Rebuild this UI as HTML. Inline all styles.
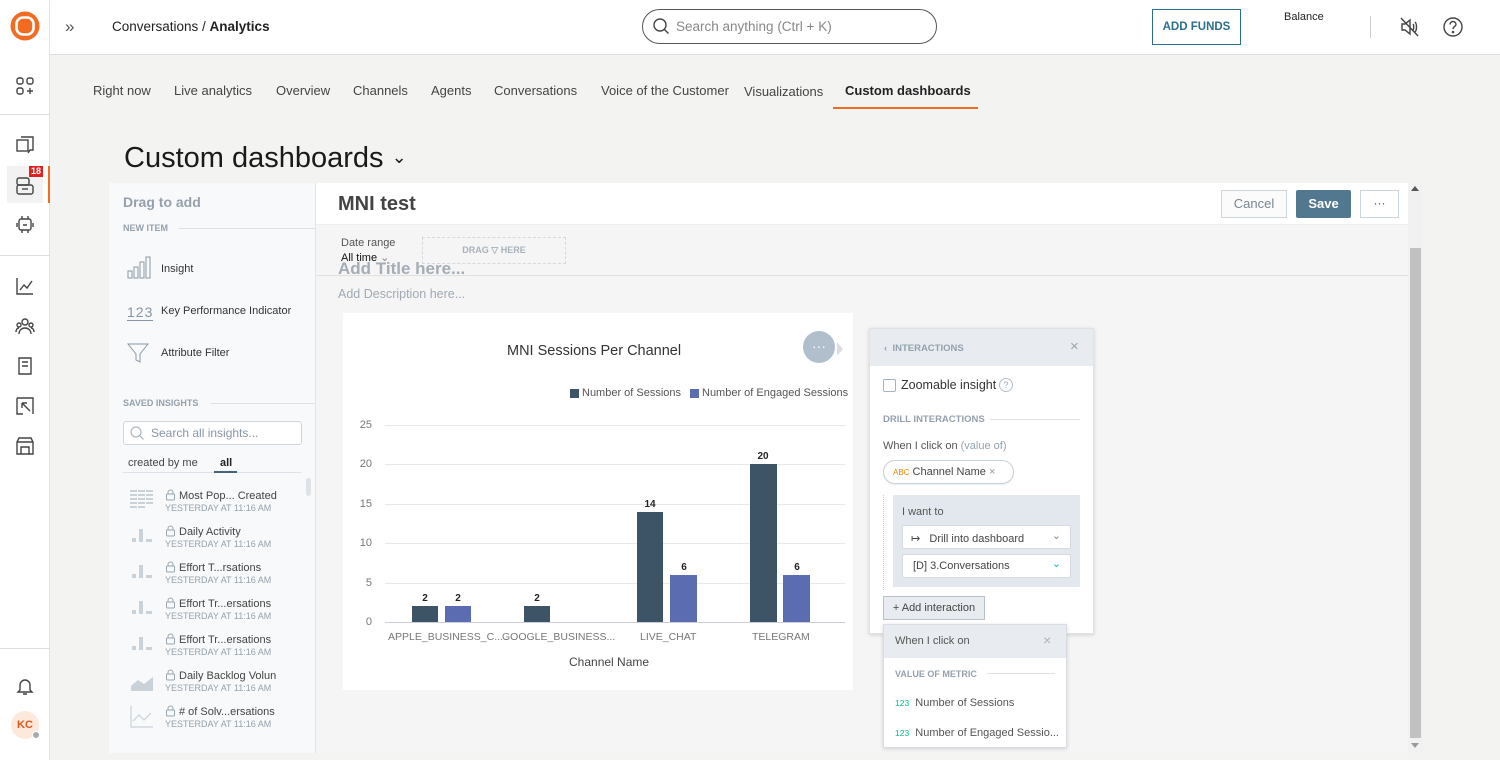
<!DOCTYPE html>
<html><head><meta charset="utf-8"><style>
*{box-sizing:border-box;margin:0;padding:0}
body{width:1500px;height:760px;overflow:hidden;font-family:"Liberation Sans",sans-serif;background:#f3f3f2;position:relative;color:#333}
.a{position:absolute}
.ic{position:absolute;stroke:#444;fill:none;stroke-width:1.4}
.tab{position:absolute;top:83px;font-size:13px;color:#444}
.grey{color:#94a1ad}
.si{position:absolute;left:130px;font-size:11px;color:#444;padding-left:49px}
.si b{display:block;font-weight:normal;font-size:9px;color:#94a1ad;margin-top:1px;margin-left:-14px}
.lk{position:absolute;left:35px;top:1px}
.gl{position:absolute;left:385px;width:460px;height:1px;background:#e8e8e8}
.yl{position:absolute;left:358px;width:14px;text-align:right;font-size:11px;color:#777}
.bar{position:absolute;width:26px}
.bv{position:absolute;font-size:10px;font-weight:bold;color:#222;width:26px;text-align:center}
</style></head><body>
<!-- left rail -->
<div class="a" style="left:0;top:0;width:50px;height:760px;background:#fff;border-right:1px solid #e4e4e4"></div>
<svg class="a" style="left:10px;top:11px" width="30" height="30"><circle cx="15" cy="15" r="14.5" fill="#f26b22"/><rect x="6.5" y="6.5" width="17" height="17" rx="6.5" fill="none" stroke="#fff" stroke-width="2.6"/><rect x="10.5" y="10.5" width="9" height="9" rx="3" fill="#f26b22"/></svg>
<div class="a" style="left:0;top:114px;width:50px;height:1px;background:#ddd"></div>
<div class="a" style="left:0;top:255px;width:50px;height:1px;background:#ddd"></div>
<div class="a" style="left:0;top:648px;width:50px;height:1px;background:#ddd"></div>
<svg class="ic" style="left:15px;top:76px" width="20" height="20"><rect x="2" y="2" width="6" height="6" rx="2"/><rect x="12" y="2" width="6" height="6" rx="2"/><rect x="2" y="12" width="6" height="6" rx="2"/><path d="M15 12v6M12 15h6"/></svg>
<svg class="ic" style="left:15px;top:136px" width="20" height="20"><rect x="2" y="4" width="11" height="11"/><path d="M6 1h12v13h-3l-2 3"/></svg>
<div class="a" style="left:7px;top:166px;width:36px;height:37px;background:#f2f2f2"></div>
<div class="a" style="left:48px;top:166px;width:2px;height:37px;background:#f26b22"></div>
<svg class="ic" style="left:15px;top:176px" width="20" height="20"><rect x="2" y="2" width="12" height="7" rx="2"/><rect x="2" y="9" width="16" height="9" rx="2"/><path d="M7 13h6"/></svg>
<div class="a" style="left:29px;top:166px;background:#d22;color:#fff;font-size:9px;font-weight:bold;padding:0 2px;line-height:11px">18</div>
<svg class="ic" style="left:15px;top:214px" width="20" height="20"><rect x="4" y="5" width="12" height="11" rx="2"/><path d="M2 9v4M18 9v4M7 2v3M13 2v3M8 11h4M7 16v3M13 16v3"/></svg>
<svg class="ic" style="left:15px;top:276px" width="20" height="20"><path d="M2 2v16h16M5 14l4-5 3 3 5-7"/></svg>
<svg class="ic" style="left:15px;top:316px" width="20" height="20"><circle cx="10" cy="6" r="3"/><circle cx="4" cy="9" r="2"/><circle cx="16" cy="9" r="2"/><path d="M4 18c0-4 3-6 6-6s6 2 6 6M1 16c0-2 1-4 3-4M19 16c0-2-1-4-3-4"/></svg>
<svg class="ic" style="left:15px;top:356px" width="20" height="20"><path d="M4 2h12v16H4zM7 6h6M7 10h6"/></svg>
<svg class="ic" style="left:15px;top:396px" width="20" height="20"><path d="M2 2h16v16M2 2v16h6M7 7l8 8M7 7h5M7 7v5"/></svg>
<svg class="ic" style="left:15px;top:436px" width="20" height="20"><path d="M2 6l2-4h12l2 4v12H2zM2 6h16M6 18v-7h8v7"/></svg>
<svg class="ic" style="left:15px;top:676px" width="20" height="20"><path d="M5 14V9a5 5 0 0110 0v5l2 2H3zM8 18h4"/></svg>
<div class="a" style="left:11px;top:711px;width:28px;height:28px;border-radius:50%;background:#fde9dc;color:#e4561b;font-size:11px;font-weight:bold;text-align:center;line-height:28px">KC</div>
<div class="a" style="left:32px;top:731px;width:8px;height:8px;border-radius:50%;background:#aaa;border:1px solid #fff"></div>
<!-- top bar -->
<div class="a" style="left:50px;top:0;width:1450px;height:55px;background:#fff;border-bottom:1px solid #ddd"></div>
<div class="a" style="left:65px;top:17px;font-size:17px;color:#555">»</div>
<div class="a" style="left:112px;top:19px;font-size:13.5px;color:#222">Conversations / <b>Analytics</b></div>
<div class="a" style="left:642px;top:9px;width:295px;height:35px;border:1px solid #555;border-radius:18px;font-size:13.5px;color:#888;padding:9px 0 0 33px">Search anything (Ctrl + K)</div>
<svg class="ic" style="left:652px;top:17px" width="18" height="18"><circle cx="8" cy="8" r="6"/><path d="M12.5 12.5l4 4"/></svg>
<div class="a" style="left:1152px;top:9px;width:89px;height:36px;border:1px solid #2b6f8f;color:#2b6f8f;font-size:11.5px;font-weight:bold;text-align:center;line-height:34px">ADD FUNDS</div>
<div class="a" style="left:1284px;top:11px;font-size:11px;color:#222">Balance</div>
<div class="a" style="left:1370px;top:16px;width:1px;height:22px;background:#ccc"></div>
<svg class="ic" style="left:1399px;top:16px" width="22" height="22"><path d="M3 8h3l5-4v14l-5-4H3zM14 8c1 1 1 5 0 6M16 6c2 2 2 8 0 10M2 2l17 18"/></svg>
<svg class="ic" style="left:1442px;top:16px" width="22" height="22"><circle cx="11" cy="11" r="9"/><path d="M8 8.5a3 3 0 116 0c0 2-3 2-3 4.5"/><circle cx="11" cy="16" r=".6"/></svg>
<!-- tabs -->
<div class="tab" style="left:93px">Right now</div>
<div class="tab" style="left:174px">Live analytics</div>
<div class="tab" style="left:276px">Overview</div>
<div class="tab" style="left:353px">Channels</div>
<div class="tab" style="left:431px">Agents</div>
<div class="tab" style="left:494px">Conversations</div>
<div class="tab" style="left:601px">Voice of the Customer</div>
<div class="tab" style="left:744px;top:84px">Visualizations</div>
<div class="tab" style="left:845px;font-weight:bold;color:#222">Custom dashboards</div>
<div class="a" style="left:833px;top:107px;width:145px;height:2px;background:#f26b22"></div>
<div class="a" style="left:124px;top:142px;font-size:29px;color:#1a1a1a">Custom dashboards <span style="font-size:18px;vertical-align:4px">&#8964;</span></div>
<!-- left panel -->
<div class="a" style="left:109px;top:183px;width:207px;height:570px;background:#f8f9fa;border-right:1px solid #e3e5e8"></div>
<div class="a grey" style="left:123px;top:194px;font-size:14px;font-weight:bold">Drag to add</div>
<div class="a grey" style="left:123px;top:223px;font-size:9px;font-weight:bold">NEW ITEM</div>
<div class="a" style="left:178px;top:228px;width:137px;height:1px;background:#dde2e8"></div>
<svg class="ic" style="left:127px;top:256px;stroke:#8796a5;stroke-width:1" width="24" height="24"><rect x="1" y="15" width="4" height="7"/><rect x="7" y="11" width="4" height="11"/><rect x="13" y="6" width="4" height="16"/><rect x="19" y="1" width="4" height="21"/></svg>
<div class="a" style="left:161px;top:263px;font-size:11px;color:#333">Insight</div>
<div class="a" style="left:127px;top:304px;font-size:14px;color:#8796a5;border-bottom:1px solid #8796a5;letter-spacing:1px">123</div>
<div class="a" style="left:161px;top:305px;font-size:11px;color:#333">Key Performance Indicator</div>
<svg class="ic" style="left:127px;top:342px;stroke:#8796a5;stroke-width:1" width="22" height="22"><path d="M1 2h20l-8 10v8l-4-2v-6z"/></svg>
<div class="a" style="left:161px;top:347px;font-size:11px;color:#333">Attribute Filter</div>
<div class="a grey" style="left:123px;top:398px;font-size:9px;font-weight:bold">SAVED INSIGHTS</div>
<div class="a" style="left:210px;top:403px;width:105px;height:1px;background:#dde2e8"></div>
<div class="a" style="left:123px;top:421px;width:179px;height:24px;background:#fff;border:1px solid #cfd6dd;border-radius:3px;font-size:12px;color:#8796a5;padding:4px 0 0 27px">Search all insights...</div>
<svg class="ic" style="left:129px;top:425px;stroke:#a0acb8;stroke-width:1" width="16" height="16"><circle cx="7" cy="7" r="5"/><path d="M10.5 10.5l4 4"/></svg>
<div class="a" style="left:128px;top:457px;font-size:11px;color:#444">created by me</div>
<div class="a" style="left:220px;top:457px;font-size:11px;font-weight:bold;color:#222">all</div>
<div class="a" style="left:123px;top:472px;width:178px;height:1px;background:#dde2e8"></div>
<div class="a" style="left:214px;top:471px;width:23px;height:2px;background:#44627a"></div>
<div class="a" style="left:306px;top:478px;width:5px;height:18px;border-radius:3px;background:#dfe3e7"></div>
<svg class="a" style="left:130px;top:490px" width="25" height="135" fill="#c9d1d9">
<g><rect x="0" y="0" width="7" height="2"/><rect x="8" y="0" width="7" height="2"/><rect x="16" y="0" width="7" height="2"/><rect x="0" y="4" width="7" height="2"/><rect x="8" y="4" width="7" height="2"/><rect x="16" y="4" width="7" height="2"/><rect x="0" y="8" width="7" height="2"/><rect x="8" y="8" width="7" height="2"/><rect x="16" y="8" width="7" height="2"/><rect x="0" y="12" width="7" height="2"/><rect x="8" y="12" width="7" height="2"/><rect x="16" y="12" width="7" height="2"/><rect x="0" y="16" width="7" height="2"/><rect x="8" y="16" width="7" height="2"/></g>
<g transform="translate(0,36)"><rect x="2" y="12" width="4" height="4"/><rect x="9" y="3" width="4" height="13"/><rect x="16" y="13" width="6" height="3"/></g>
<g transform="translate(0,72)"><rect x="2" y="12" width="4" height="4"/><rect x="9" y="3" width="4" height="13"/><rect x="16" y="13" width="6" height="3"/></g>
<g transform="translate(0,108)"><rect x="2" y="12" width="4" height="4"/><rect x="9" y="3" width="4" height="13"/><rect x="16" y="13" width="6" height="3"/></g>
</svg>
<svg class="a" style="left:130px;top:634px" width="25" height="100"><g fill="#c9d1d9"><rect x="2" y="12" width="4" height="4"/><rect x="9" y="3" width="4" height="13"/><rect x="16" y="13" width="6" height="3"/></g><path d="M1 52l7-6 6 4 9-7v14H1z" fill="#c9d1d9"/><path d="M1 72v21h22M3 87l6-6 5 5 7-7" fill="none" stroke="#c9d1d9" stroke-width="1.2"/></svg>
<!-- lock icons -->
<svg class="a" style="left:165px;top:489px" width="12" height="230" fill="none" stroke="#9aa5b0" stroke-width="1">
<g><path d="M3 5V3.5a2.5 2.5 0 015 0V5"/><rect x="1.5" y="5" width="8" height="6" rx="1"/></g>
<g transform="translate(0,36)"><path d="M3 5V3.5a2.5 2.5 0 015 0V5"/><rect x="1.5" y="5" width="8" height="6" rx="1"/></g>
<g transform="translate(0,72)"><path d="M3 5V3.5a2.5 2.5 0 015 0V5"/><rect x="1.5" y="5" width="8" height="6" rx="1"/></g>
<g transform="translate(0,108)"><path d="M3 5V3.5a2.5 2.5 0 015 0V5"/><rect x="1.5" y="5" width="8" height="6" rx="1"/></g>
<g transform="translate(0,144)"><path d="M3 5V3.5a2.5 2.5 0 015 0V5"/><rect x="1.5" y="5" width="8" height="6" rx="1"/></g>
<g transform="translate(0,180)"><path d="M3 5V3.5a2.5 2.5 0 015 0V5"/><rect x="1.5" y="5" width="8" height="6" rx="1"/></g>
<g transform="translate(0,216)"><path d="M3 5V3.5a2.5 2.5 0 015 0V5"/><rect x="1.5" y="5" width="8" height="6" rx="1"/></g>
</svg>
<div class="si" style="top:490px">Most Pop... Created<b>YESTERDAY AT 11:16 AM</b></div>
<div class="si" style="top:526px">Daily Activity<b>YESTERDAY AT 11:16 AM</b></div>
<div class="si" style="top:562px">Effort T...rsations<b>YESTERDAY AT 11:16 AM</b></div>
<div class="si" style="top:598px">Effort Tr...ersations<b>YESTERDAY AT 11:16 AM</b></div>
<div class="si" style="top:634px">Effort Tr...ersations<b>YESTERDAY AT 11:16 AM</b></div>
<div class="si" style="top:670px">Daily Backlog Volun<b>YESTERDAY AT 11:16 AM</b></div>
<div class="si" style="top:706px"># of Solv...ersations<b>YESTERDAY AT 11:16 AM</b></div>
<!-- main -->
<div class="a" style="left:316px;top:183px;width:1092px;height:570px;background:#f5f5f5"></div>
<div class="a" style="left:316px;top:183px;width:1092px;height:42px;background:#fff;border-bottom:1px solid #eee"></div>
<div class="a" style="left:338px;top:193px;font-size:20px;font-weight:bold;color:#444">MNI test</div>
<div class="a" style="left:1221px;top:190px;width:66px;height:28px;border:1px solid #ccd4dc;background:#fbfbfb;color:#7a8794;font-size:13px;text-align:center;line-height:26px">Cancel</div>
<div class="a" style="left:1296px;top:190px;width:55px;height:28px;background:#52788f;border-radius:2px;color:#fff;font-size:13px;font-weight:bold;text-align:center;line-height:28px">Save</div>
<div class="a" style="left:1360px;top:190px;width:39px;height:28px;border:1px solid #ccd4dc;background:#fff;color:#555;font-size:12px;text-align:center;line-height:24px">···</div>
<div class="a" style="left:338px;top:258px;font-size:17px;font-weight:bold;color:#a4adb6;height:17px;overflow:hidden;line-height:22px">Add Title here...</div>
<div class="a" style="left:340px;top:236px;width:62px;height:26px;background:#f5f5f5"></div>
<div class="a" style="left:341px;top:237px;font-size:11px;color:#555">Date range</div>
<div class="a" style="left:341px;top:251px;font-size:11px;color:#111">All time <span style="color:#888">&#8964;</span></div>
<div class="a" style="left:422px;top:237px;width:144px;height:27px;border:1px dashed #d5d9de;background:#f5f5f5;font-size:9px;font-weight:bold;color:#a8b2bc;text-align:center;line-height:25px">DRAG ▽ HERE</div>
<div class="a" style="left:316px;top:275px;width:1092px;height:1px;background:#e0e0e0"></div>
<div class="a" style="left:338px;top:287px;font-size:12.5px;color:#a0aab4">Add Description here...</div>
<!-- chart -->
<div class="a" style="left:343px;top:313px;width:510px;height:377px;background:#fff"></div>
<div class="a" style="left:507px;top:343px;font-size:14.5px;color:#333">MNI Sessions Per Channel</div>
<div class="a" style="left:803px;top:331px;width:32px;height:32px;border-radius:50%;background:#b1bfcc;color:#fff;text-align:center;line-height:30px;font-size:14px">···</div>
<div class="a" style="left:837px;top:342px;width:0;height:0;border:7px solid transparent;border-left:6px solid #d9dee3"></div>
<div class="a" style="left:570px;top:389px;width:9px;height:9px;background:#3d5466"></div>
<div class="a" style="left:582px;top:387px;font-size:11px;color:#555">Number of Sessions</div>
<div class="a" style="left:690px;top:389px;width:9px;height:9px;background:#5b6db0"></div>
<div class="a" style="left:702px;top:387px;font-size:11px;color:#555">Number of Engaged Sessions</div>
<div class="gl" style="top:425px"></div><div class="gl" style="top:464px"></div><div class="gl" style="top:504px"></div><div class="gl" style="top:543px"></div><div class="gl" style="top:583px"></div><div class="gl" style="top:622px;background:#ccd"></div>
<div class="yl" style="top:419px">25</div><div class="yl" style="top:458px">20</div><div class="yl" style="top:498px">15</div><div class="yl" style="top:537px">10</div><div class="yl" style="top:577px">5</div><div class="yl" style="top:616px">0</div>
<div class="bar" style="left:412px;top:606px;height:16px;background:#3d5466"></div>
<div class="bar" style="left:445px;top:606px;height:16px;background:#5b6db0"></div>
<div class="bar" style="left:524px;top:606px;height:16px;background:#3d5466"></div>
<div class="bar" style="left:637px;top:512px;height:110px;background:#3d5466"></div>
<div class="bar" style="left:670px;top:575px;height:47px;background:#5b6db0;width:27px"></div>
<div class="bar" style="left:750px;top:464px;height:158px;background:#3d5466;width:27px"></div>
<div class="bar" style="left:783px;top:575px;height:47px;background:#5b6db0;width:27px"></div>
<div class="bv" style="left:412px;top:593px">2</div><div class="bv" style="left:445px;top:593px">2</div><div class="bv" style="left:524px;top:593px">2</div>
<div class="bv" style="left:637px;top:499px">14</div><div class="bv" style="left:671px;top:562px">6</div><div class="bv" style="left:750px;top:451px">20</div><div class="bv" style="left:784px;top:562px">6</div>
<div class="a" style="left:388px;top:631px;font-size:10.5px;color:#777">APPLE_BUSINESS_C...</div>
<div class="a" style="left:502px;top:631px;font-size:10.5px;color:#777">GOOGLE_BUSINESS...</div>
<div class="a" style="left:640px;top:631px;font-size:10.5px;color:#777">LIVE_CHAT</div>
<div class="a" style="left:752px;top:631px;font-size:10.5px;color:#777">TELEGRAM</div>
<div class="a" style="left:569px;top:655px;font-size:12px;color:#444">Channel Name</div>
<!-- interactions panel -->
<div class="a" style="left:869px;top:328px;width:225px;height:306px;background:#fff;border:1px solid #dfe3e8;box-shadow:0 1px 4px rgba(0,0,0,.15)"></div>
<div class="a" style="left:870px;top:329px;width:223px;height:37px;background:#e8ecf0"></div>
<div class="a grey" style="left:884px;top:343px;font-size:9.5px;font-weight:bold">‹&nbsp; INTERACTIONS</div>
<div class="a" style="left:1070px;top:338px;font-size:15px;color:#9aa5b0">×</div>
<div class="a" style="left:883px;top:379px;width:13px;height:13px;border:1px solid #a8b2bc;border-radius:2px;background:#fff"></div>
<div class="a" style="left:901px;top:378px;font-size:12.5px;color:#333">Zoomable insight</div>
<div class="a" style="left:999px;top:378px;width:14px;height:14px;border:1px solid #b5bec7;border-radius:50%;font-size:9px;color:#9aa5b0;text-align:center;line-height:12px">?</div>
<div class="a grey" style="left:883px;top:414px;font-size:9.5px;font-weight:bold">DRILL INTERACTIONS</div>
<div class="a" style="left:990px;top:419px;width:90px;height:1px;background:#dde2e8"></div>
<div class="a" style="left:883px;top:440px;font-size:11px;color:#555">When I click on <span class="grey">(value of)</span></div>
<div class="a" style="left:883px;top:460px;width:131px;height:24px;border:1px solid #c8d0d8;border-radius:12px;font-size:11px;color:#444;padding:5px 0 0 9px;box-shadow:0 1px 1px rgba(0,0,0,.08)"><span style="color:#f18600;font-size:8px">ABC</span> Channel Name <span style="color:#999">×</span></div>
<div class="a" style="left:883px;top:495px;width:1px;height:95px;border-left:1px dotted #ccc"></div>
<div class="a" style="left:893px;top:495px;width:187px;height:92px;background:#e3e8ee"></div>
<div class="a" style="left:902px;top:506px;font-size:11px;color:#555">I want to</div>
<div class="a" style="left:902px;top:525px;width:169px;height:24px;background:#fff;border:1px solid #d5dbe1;border-radius:2px;font-size:11px;color:#444;padding:6px 0 0 8px">↦&nbsp;&nbsp; Drill into dashboard<span style="position:absolute;right:9px;top:3px;color:#888">&#8964;</span></div>
<div class="a" style="left:902px;top:554px;width:169px;height:24px;background:#fff;border:1px solid #d5dbe1;border-radius:2px;font-size:11px;color:#444;padding:5px 0 0 10px">[D] 3.Conversations<span style="position:absolute;right:9px;top:2px;color:#14b2e2">&#8964;</span></div>
<div class="a" style="left:883px;top:596px;width:102px;height:24px;background:#e8ecf0;border:1px solid #b7c1cb;font-size:11px;color:#444;text-align:center;line-height:22px">+ Add interaction</div>
<div class="a" style="left:883px;top:624px;width:184px;height:124px;background:#fff;border:1px solid #d7dde3;box-shadow:0 1px 4px rgba(0,0,0,.15)"></div>
<div class="a" style="left:884px;top:625px;width:182px;height:33px;background:#e8ecf0"></div>
<div class="a" style="left:895px;top:635px;font-size:11px;color:#555">When I click on</div>
<div class="a" style="left:1043px;top:632px;font-size:14px;color:#aab3bc">×</div>
<div class="a grey" style="left:895px;top:669px;font-size:9px;font-weight:bold">VALUE OF METRIC</div>
<div class="a" style="left:987px;top:673px;width:68px;height:1px;background:#dde2e8"></div>
<div class="a" style="left:895px;top:697px;font-size:11px;color:#555"><span style="color:#00c18d;font-size:8.5px">123</span>&nbsp; Number of Sessions</div>
<div class="a" style="left:895px;top:727px;font-size:11px;color:#555"><span style="color:#00c18d;font-size:8.5px">123</span>&nbsp; Number of Engaged Sessio...</div>
<!-- scrollbar -->
<div class="a" style="left:1408px;top:183px;width:15px;height:570px;background:#f1f1f1"></div>
<div class="a" style="left:1410px;top:248px;width:11px;height:490px;background:#c1c1c1"></div>
<div class="a" style="left:1411px;top:186px;width:0;height:0;border:4px solid transparent;border-bottom:5px solid #555;border-top:0"></div>
<div class="a" style="left:1411px;top:743px;width:0;height:0;border:4px solid transparent;border-top:5px solid #999;border-bottom:0"></div>
</body></html>
